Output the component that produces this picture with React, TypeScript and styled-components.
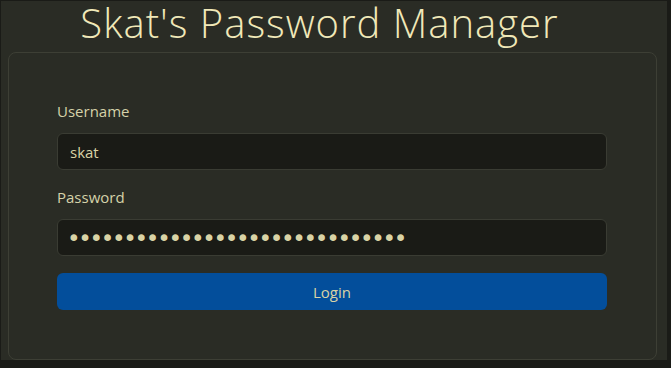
import styled, { createGlobalStyle } from 'styled-components';

const GlobalStyle = createGlobalStyle`
  html, body {
    margin: 0;
    padding: 0;
    background: #1a1b17;
  }
  body {
    font-family: 'Open Sans', 'Noto Sans', sans-serif;
  }
`;

const Page = styled.main`
  box-sizing: border-box;
  width: 666px;
  height: 359px;
  margin: 1px 0 0 1px;
  padding: 0 10px 0 7px;
  background: #2a2c25;
  display: flex;
  flex-direction: column;
`;

const Title = styled.h1`
  margin: 0;
  height: 51px;
  padding-right: 26px;
  text-align: center;
  font-weight: 300;
  font-size: 40px;
  letter-spacing: 1px;
  line-height: 43px;
  color: #f0e8b8;
  white-space: nowrap;
`;

const Card = styled.form`
  box-sizing: border-box;
  flex: 1;
  border: 1px solid #3d3f35;
  border-radius: 8px;
  padding: 48px 49px 48px 48px;
  display: flex;
  flex-direction: column;
  gap: 17px;
`;

const Field = styled.label`
  display: flex;
  flex-direction: column;
  gap: 11px;
`;

const LabelText = styled.span`
  font-size: 15px;
  line-height: 21px;
  color: #d5d2a9;
`;

const Input = styled.input<{ $masked?: boolean }>`
  box-sizing: border-box;
  height: 37px;
  width: 100%;
  border: 1px solid #3a3c33;
  border-radius: 6px;
  background: #1a1b16;
  color: #d9d3a5;
  padding: 0 ${(p) => (p.$masked ? '9px' : '12px')};
  font-family: ${(p) =>
    p.$masked ? "'DejaVu Sans', sans-serif" : "'Open Sans', 'Noto Sans', sans-serif"};
  font-size: ${(p) => (p.$masked ? '23px' : '15px')};
  letter-spacing: ${(p) => (p.$masked ? '-2.3px' : 'normal')};
  outline: none;
`;

const Button = styled.button`
  height: 37px;
  border: none;
  border-radius: 6px;
  background: #034e9b;
  color: #d9d3a5;
  font-family: 'Open Sans', 'Noto Sans', sans-serif;
  font-size: 15px;
  cursor: pointer;
`;

export default function App() {
  return (
    <>
      <GlobalStyle />
      <Page>
        <Title>Skat's Password Manager</Title>
        <Card onSubmit={(e) => e.preventDefault()}>
          <Field>
            <LabelText>Username</LabelText>
            <Input defaultValue="skat" />
          </Field>
          <Field>
            <LabelText>Password</LabelText>
            <Input $masked type="password" defaultValue="abcdefghijklmnopqrstuvwxyz1234" />
          </Field>
          <Button type="submit">Login</Button>
        </Card>
      </Page>
    </>
  );
}
